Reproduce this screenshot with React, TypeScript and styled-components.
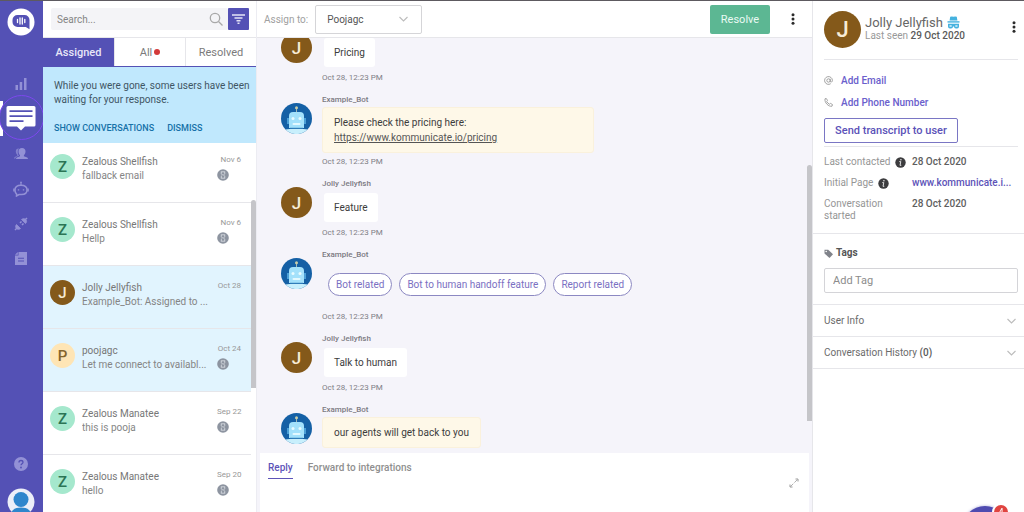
import React from "react";
import styled, { createGlobalStyle, css } from "styled-components";

const purple = "#5451b5";
const line = "#e6e6ea";

const GlobalStyle = createGlobalStyle`
  * { box-sizing: border-box; }
  body { margin: 0; background: #fff; font-family: Roboto, "Liberation Sans", sans-serif; font-size: 10px; color: #4a4a4a; }
  button, input, select { font: inherit; color: inherit; margin: 0; }
  button { cursor: pointer; background: none; border: 0; padding: 0; }
  ul, dl, dd, h1, h2, p { margin: 0; padding: 0; list-style: none; font-weight: inherit; }
  a { text-decoration: none; color: inherit; }
  svg { display: block; flex: none; }
`;

const Shell = styled.div`
  display: grid;
  grid-template-columns: 43px 214px minmax(0, 1fr) 212px;
  height: 100vh;
  overflow: hidden;
  border-top: 1px solid #5d5a60;
`;

/* ---------- navigation rail ---------- */

const Rail = styled.nav`
  display: flex;
  flex-direction: column;
  align-items: center;
  background: ${purple};
  padding: 7px 1px 0 0;
  min-height: 0;
  color: #9391d6;
  z-index: 1;
`;

const NavList = styled.ul`
  margin-top: 30px;
  width: 100%;
`;

const NavItem = styled.li<{ $active?: boolean }>`
  height: 35px;
  display: flex;
  justify-content: center;
  border-left: ${(p) => (p.$active ? "3px solid #fff" : "0")};
`;

const NavLink = styled.a<{ $active?: boolean }>`
  display: flex;
  align-items: center;
  justify-content: center;
  flex: none;
  ${(p) =>
    p.$active &&
    css`
      width: 45px;
      height: 45px;
      margin: -6px -2px -4px -5px;
      border: 1px solid #7c48ee;
      border-radius: 50%;
      background: ${purple};
      color: #fff;
    `}
`;

const RailFoot = styled.div`
  margin-top: auto;
  display: flex;
  flex-direction: column;
  align-items: center;
  gap: 17px;
`;

const ProfileButton = styled.button`
  height: 24px;
  overflow: hidden;
`;

/* ---------- conversation list ---------- */

const ListPanel = styled.section`
  display: flex;
  flex-direction: column;
  min-height: 0;
  border-right: 1px solid #ececf2;
`;

const SearchBar = styled.form`
  display: flex;
  height: 37px;
  padding: 7px 7px 7px 8px;
  border-bottom: 1px solid ${line};
`;

const SearchField = styled.label`
  flex: 1;
  display: flex;
  align-items: center;
  background: #f4f4f7;
  padding: 0 5px 0 6px;
  color: #a3a3a3;
  border-radius: 2px;
`;

const SearchInput = styled.input`
  flex: 1;
  min-width: 0;
  border: 0;
  padding: 0;
  background: none;
  outline: 0;
  &::placeholder { color: #858585; opacity: 1; }
`;

const FilterButton = styled.button`
  width: 21px;
  display: grid;
  place-items: center;
  background: ${purple};
  border-radius: 1px;
`;

const Tabs = styled.div`
  display: grid;
  grid-template-columns: repeat(3, 1fr);
  height: 29px;
  border-bottom: 1px solid ${purple};
`;

const Tab = styled.button<{ $active?: boolean }>`
  display: flex;
  align-items: center;
  justify-content: center;
  gap: 2px;
  font-size: 11px;
  font-weight: ${(p) => (p.$active ? 500 : 400)};
  color: ${(p) => (p.$active ? "#e8e7f8" : "#7b7b7b")};
  background: ${(p) => (p.$active ? purple : "#fff")};
  & + & { border-left: 1px solid ${line}; }
`;

const Dot = styled.span`
  width: 6px;
  height: 6px;
  border-radius: 50%;
  background: #d33a3a;
`;

const Banner = styled.div`
  background: #c0e8fd;
  padding: 12px 0 0 11px;
  height: 76px;
  line-height: 14px;
  color: #3f5664;
  white-space: nowrap;
  z-index: 1;
`;

const BannerActions = styled.div`
  display: flex;
  gap: 13px;
  margin-top: 14px;
`;

const BannerAction = styled.button`
  font-size: 9px;
  font-weight: 500;
  line-height: 14px;
  color: #1671a8;
`;

const ScrollPane = styled.div`
  flex: 1;
  min-height: 0;
  display: grid;
  grid-template-columns: minmax(0, 1fr) 5px;
  overflow: hidden;
`;

const Thumb = styled.div<{ $start: number; $size: number }>`
  margin-top: ${(p) => p.$start}px;
  height: ${(p) => p.$size}px;
  border-radius: 3px 3px 0 0;
  background: #c5c5c9;
`;

const ConversationList = styled.ul`
  margin-top: -3px;
`;

const Conversation = styled.li<{ $unread?: boolean }>`
  display: grid;
  grid-template-columns: 25px minmax(0, 1fr) 34px;
  height: 63px;
  padding: 14px 0 0 7px;
  border-bottom: 1px solid ${line};
  background: ${(p) => (p.$unread ? "#e1f4fe" : "#fff")};
`;

const Initial = styled.span<{ $bg: string; $fg: string; $size: number; $text: number }>`
  flex: none;
  display: grid;
  place-items: center;
  width: ${(p) => p.$size}px;
  height: ${(p) => p.$size}px;
  border-radius: 50%;
  background: ${(p) => p.$bg};
  color: ${(p) => p.$fg};
  font-size: ${(p) => p.$text}px;
  font-weight: 500;
`;

const Summary = styled.div`
  line-height: 14px;
  color: #777;
  padding: 1px 0 0 7px;
`;

const Preview = styled.p`
  overflow: hidden;
  text-overflow: ellipsis;
  white-space: nowrap;
  color: #858585;
`;

const Meta = styled.div`
  display: flex;
  flex-direction: column;
  gap: 3px;
  font-size: 8px;
  line-height: 12px;
  color: #989898;
`;

const MetaDate = styled.time`
  text-align: right;
  padding-right: 10px;
  white-space: nowrap;
`;

/* ---------- chat ---------- */

const Chat = styled.main`
  display: flex;
  flex-direction: column;
  min-height: 0;
  background: #f5f4fa;
`;

const ChatHeader = styled.header`
  display: flex;
  align-items: center;
  height: 37px;
  flex: none;
  padding: 0 15px 0 7px;
  background: #fff;
  border-bottom: 1px solid ${line};
`;

const AssignLabel = styled.label`
  display: flex;
  align-items: center;
  gap: 7px;
  color: #a0a0a0;
`;

const SelectWrap = styled.span`
  display: grid;
  align-items: center;
  & > * { grid-area: 1 / 1; }
  & > svg { justify-self: end; margin-right: 14px; pointer-events: none; }
`;

const AssignSelect = styled.select`
  appearance: none;
  width: 107px;
  height: 29px;
  padding: 0 11px;
  border: 1px solid #d5d5d8;
  border-radius: 2px;
  background: #fff;
  color: #555;
`;

const ResolveButton = styled.button`
  margin-left: auto;
  width: 60px;
  height: 29px;
  border-radius: 2px;
  background: #5cb793;
  color: #eafaf3;
  font-size: 11px;
`;

const MenuButton = styled.button`
  width: 8px;
  display: grid;
  place-items: center;
`;

const HeaderMenu = styled(MenuButton)`
  margin-left: 19px;
`;

const Messages = styled.div`
  display: flex;
  flex-direction: column;
  justify-content: flex-end;
  gap: 8px;
  min-height: 0;
  padding: 0 0 5px 24px;
  overflow: hidden;
`;

const MessageRow = styled.article`
  display: flex;
  flex: none;
  gap: 10px;
`;

const Face = styled.div`
  flex: none;
  width: 31px;
  padding-top: 10px;
`;

const MessageBody = styled.div`
  display: flex;
  flex-direction: column;
  align-items: flex-start;
`;

const Sender = styled.h2`
  font-size: 8px;
  font-weight: 500;
  line-height: 14px;
  color: #7c7a82;
`;

const Bubble = styled.div<{ $bot?: boolean; $wide?: boolean }>`
  line-height: 15px;
  color: #3c3c3c;
  border-radius: 3px;
  ${(p) =>
    p.$bot
      ? css`
          padding: 7px 11px;
          background: #fef8e8;
          border: 1px solid #faf1dc;
        `
      : css`
          margin: 2px 0 2px 2px;
          padding: 7px 10px;
          background: #fff;
        `}
  ${(p) => p.$wide && "width: 272px;"}
`;

const BubbleLink = styled.a`
  text-decoration: underline;
  color: #555;
`;

const Replies = styled.div`
  display: flex;
  gap: 7px;
  padding: 11px 0 12px 6px;
`;

const ReplyChip = styled.button`
  height: 23px;
  padding: 0 7px;
  border: 1px solid #8c88c2;
  border-radius: 12px;
  background: #fff;
  color: #7a70c2;
  white-space: nowrap;
`;

const Stamp = styled.time`
  margin-top: 2px;
  font-size: 8px;
  line-height: 14px;
  color: #807e86;
`;

const Composer = styled.section`
  flex: none;
  display: flex;
  flex-direction: column;
  height: 59px;
  margin: 0 3px;
  padding: 9px 10px 0 8px;
  background: #fff;
`;

const ComposerTabs = styled.div`
  display: flex;
  gap: 15px;
`;

const ComposerTab = styled.button<{ $active?: boolean }>`
  height: 17px;
  padding-bottom: 4px;
  font-weight: 500;
  line-height: 12px;
  color: ${(p) => (p.$active ? "#5d53b8" : "#8f8f8f")};
  border-bottom: 1px solid ${(p) => (p.$active ? "#5d53b8" : "transparent")};
`;

const ExpandButton = styled.button`
  align-self: flex-end;
  margin-top: -1px;
`;

/* ---------- user details ---------- */

const Details = styled.aside`
  min-height: 0;
  overflow: hidden;
  border-left: 1px solid ${line};
  color: #666;
`;

const Block = styled.section`
  padding: 0 6px 0 11px;
  border-bottom: 1px solid ${line};
`;

const Person = styled.div`
  display: flex;
  align-items: flex-start;
  height: 59px;
  padding-top: 10px;
  gap: 4px;
  border-bottom: 1px solid ${line};
`;

const PersonText = styled.div`
  flex: 1;
  padding-top: 4px;
  line-height: 12px;
  color: #999;
  white-space: nowrap;
`;

const PersonName = styled.h1`
  display: flex;
  align-items: center;
  gap: 4px;
  font-size: 13px;
  line-height: 15px;
  color: #666;
`;

const Strong = styled.b`
  font-weight: 500;
  color: #5a5a5a;
`;

const PersonMenu = styled(MenuButton)`
  margin-top: 10px;
`;

const Contacts = styled.div`
  display: flex;
  flex-direction: column;
  align-items: flex-start;
  padding: 9px 0 3px;
  border-bottom: 1px solid ${line};
`;

const ContactLink = styled.a`
  display: flex;
  align-items: center;
  gap: 8px;
  height: 22px;
  font-weight: 500;
  color: #6a60cc;
`;

const TranscriptButton = styled.button`
  height: 25px;
  width: 134px;
  margin-top: 5px;
  border: 1px solid #7a76c4;
  border-radius: 2px;
  font-weight: 500;
  font-size: 11px;
  color: #5b52b8;
  white-space: nowrap;
`;

const Facts = styled.dl`
  display: grid;
  grid-template-columns: 83px minmax(0, 1fr);
  column-gap: 5px;
  row-gap: 9px;
  padding: 9px 0 11px;
  line-height: 12px;
`;

const FactName = styled.dt<{ $icon?: boolean }>`
  display: flex;
  align-items: center;
  gap: 5px;
  height: ${(p) => (p.$icon ? "12px" : "auto")};
  white-space: ${(p) => (p.$icon ? "nowrap" : "normal")};
  width: ${(p) => (p.$icon ? "auto" : "72px")};
  color: #969696;
`;

const FactValue = styled.dd`
  white-space: nowrap;
  font-weight: 500;
  color: #5e5e5e;
`;

const PageLink = styled.a`
  color: #5d53b8;
`;

const TagField = styled.label`
  display: block;
  padding: 13px 0 11px;
`;

const TagTitle = styled.span`
  display: flex;
  align-items: center;
  gap: 3px;
  font-weight: 700;
  line-height: 12px;
  color: #555;
`;

const TagInput = styled.input`
  display: block;
  width: 100%;
  height: 25px;
  margin-top: 9px;
  padding: 0 8px;
  border: 1px solid #d4d4d8;
  border-radius: 2px;
  font-size: 11px;
  &::placeholder { color: #8c8c8c; opacity: 1; }
`;

const Fold = styled.button`
  display: flex;
  align-items: center;
  justify-content: space-between;
  width: 100%;
  height: 32px;
  padding: 0 8px 0 11px;
  border-bottom: 1px solid ${line};
  color: #6b6b6b;
`;

const Launcher = styled.button`
  position: fixed;
  right: 16px;
  bottom: -40px;
  width: 46px;
  height: 46px;
  border-radius: 50%;
  background: #4f4bb0;
  box-shadow: 0 0 3px #aaa8d8;
`;

const Badge = styled.span`
  position: absolute;
  top: -1px;
  right: 0;
  width: 14px;
  height: 14px;
  border-radius: 50%;
  background: #e04440;
  box-shadow: 0 0 0 2px #fff;
  color: #fff;
  font-size: 9px;
  line-height: 14px;
`;

/* ---------- drawings ---------- */

const Logo = () => (
  <svg width="28" height="28" viewBox="0 0 28 28" aria-label="Kommunicate">
    <circle cx="14" cy="14" r="13.5" fill="#fff" />
    <path d="M10.5 7h7a5 5 0 0 1 5 5v9.2L18.8 19h-8.3a5 5 0 0 1-5-5v-2a5 5 0 0 1 5-5z" fill={purple} />
    <path d="M10.5 11.5v3M13 10v6M15.3 10v6M17.8 11.500v3" stroke="#fff" strokeWidth="1.3" strokeLinecap="round" />
  </svg>
);

const BarsIcon = () => (
  <svg width="12" height="12" viewBox="0 0 12 12" fill="currentColor">
    <path d="M.5 7H3v5H.5zM4.700 4h2.500v8H4.700zM9 0h2.500v12H9z" />
  </svg>
);

const ChatIcon = () => (
  <svg width="30" height="26" viewBox="0 0 30 26">
    <path d="M2 1h26a1.500 1.500 0 0 1 1.500 1.500V20a1.500 1.500 0 0 1-1.500 1.500h-9L15 25.500l-4-4H2A1.500 1.500 0 0 1 .5 20V2.500A1.500 1.500 0 0 1 2 1z" fill="#fff" />
    <path d="M3.500 6.200h23M3.500 11.200h23M3.500 16.200h14" stroke={purple} strokeWidth="1.800" />
  </svg>
);

const UsersIcon = () => (
  <svg width="14" height="12" viewBox="0 0 14 12" fill="currentColor">
    <path d="M8 0c2.200 0 3.600 1.400 3.500 3.500-.1 1.700-.7 2.900-1.600 3.700v1l3.300 1.200c.6.300.8.900.8 1.600H2c0-.7.200-1.300.8-1.600l3.200-1.200v-1C5 6.400 4.500 5.200 4.500 3.500 4.400 1.400 5.800 0 8 0z" />
    <path d="M5 .5C3 .3 1.700 1.700 1.800 3.400c.1 1.600.7 2.700 1.500 3.400v.9L.8 9C.2 9.300 0 9.900 0 10.500h1.300C1.600 9 3 8.500 5 7.800 3.500 6 3.300 2.200 5 .5z" opacity=".75" />
  </svg>
);

const BotIcon = () => (
  <svg width="16" height="16" viewBox="0 0 16 16" fill="none" stroke="currentColor">
    <path d="M8 4V1" strokeWidth="1.200" />
    <circle cx="8" cy="1.200" r=".8" fill="currentColor" stroke="none" />
    <path d="M3.500 15V12.800C2.200 11.900 2 10.700 2 9c0-3.200 2.200-4.800 6-4.800S14 5.800 14 9s-2.200 4.500-5.500 4.500H6L3.500 15z" strokeWidth="1.500" />
    <path d="M1 7.500v3M15 7.500v3" strokeWidth="1.600" />
    <path d="M5.500 8.200v1.400M10.500 8.200v1.400" strokeWidth="1.400" />
  </svg>
);

const PlugIcon = () => (
  <svg width="14" height="14" viewBox="0 0 14 14" fill="none" stroke="currentColor">
    <path d="M1 13l2-2M11.200 2.800L13 1M6 6l1.500-1.500M8 8l1.500-1.500" strokeWidth="1.500" />
    <path d="M2.500 7.500l4 4c-1.500 1.300-3 1-4 0s-1.300-2.500 0-4zM7.500 2.500l4 4c1.500-1.300 1.300-3 .3-4s-2.800-1.300-4.300 0z" fill="currentColor" strokeWidth=".8" />
  </svg>
);

const DocIcon = () => (
  <svg width="12" height="13" viewBox="0 0 12 13">
    <path d="M3.500 0H12v13H0V3.500L3.500 3.500z" fill="currentColor" />
    <path d="M0 2.800L2.800 0v2.800z" fill="currentColor" />
    <path d="M3 6.200h6M3 9h6" stroke={purple} strokeWidth="1.100" />
  </svg>
);

const HelpIcon = () => (
  <svg width="14" height="14" viewBox="0 0 14 14" fill="none">
    <circle cx="7" cy="7" r="7" fill="currentColor" />
    <path d="M5 5.500C5 4.200 5.900 3.500 7 3.500s2 .7 2 1.800c0 1.300-2 1.500-2 3" stroke={purple} strokeWidth="1.300" />
    <circle cx="7" cy="10.500" r=".9" fill={purple} />
  </svg>
);

const ProfileIcon = () => (
  <svg width="28" height="28" viewBox="0 0 28 28">
    <circle cx="14" cy="14" r="13.500" fill="#eceff8" />
    <circle cx="14" cy="11.500" r="7.500" fill="#2f86cc" />
    <path d="M4 26c1-5 5-6.500 10-6.500S23 21 24 26z" fill="#2f86cc" />
  </svg>
);

const SearchIcon = () => (
  <svg width="14" height="14" viewBox="0 0 14 14" fill="none" stroke="#a8a8a8" strokeWidth="1.300">
    <circle cx="6" cy="6" r="4.700" />
    <path d="M9.500 9.500l4 4" />
  </svg>
);

const FilterIcon = () => (
  <svg width="13" height="10" viewBox="0 0 13 10" stroke="#e4e3f6" strokeWidth="1.400">
    <path d="M0 1h13M2.500 4h8M4.500 6.800h4M5.500 9.300h2" />
  </svg>
);

const HourglassIcon = () => (
  <svg width="12" height="12" viewBox="0 0 12 12">
    <circle cx="6" cy="6" r="5.800" fill="#8d94a0" />
    <path d="M3.800 2.800h4.400M3.800 9.200h4.400M4.300 3v1.800L5.500 6 4.300 7.200V9M7.700 3v1.800L6.500 6l1.200 1.200V9" fill="none" stroke="#d5d9df" strokeWidth=".9" />
  </svg>
);

const Chevron = () => (
  <svg width="9" height="6" viewBox="0 0 9 6" fill="none" stroke="#bcbcbc" strokeWidth="1.100">
    <path d="M.5 1l4 4 4-4" />
  </svg>
);

const DotsIcon = () => (
  <svg width="4" height="12" viewBox="0 0 4 12" fill="#2b2b2b">
    <circle cx="2" cy="1.700" r="1.500" />
    <circle cx="2" cy="6" r="1.500" />
    <circle cx="2" cy="10.300" r="1.500" />
  </svg>
);

const RobotFace = () => (
  <svg width="31" height="31" viewBox="0 0 31 31">
    <circle cx="15.500" cy="15.500" r="15.500" fill="#1560a5" />
    <path d="M4.500 26.500C8 25.500 23 25.500 26.500 26.500a15.500 15.500 0 0 1-22 0z" fill="#c8effc" />
    <path d="M15.500 9V5" stroke="#9fb9b6" strokeWidth="1" />
    <circle cx="15.500" cy="4.800" r="1.500" fill="#c9cda8" />
    <path d="M8 13a4 4 0 0 1 4-4h7a4 4 0 0 1 4 4v12H8z" fill="#a3e1fb" />
    <path d="M6 15h2v6H6zM23 15h2v6h-2z" fill="#4c9fd6" />
    <circle cx="12" cy="15.500" r="1.500" fill="#e9fbff" />
    <circle cx="19" cy="15.500" r="1.500" fill="#e9fbff" />
    <rect x="11.500" y="20" width="8" height="2" rx="1" fill="#e3f9ff" />
    <path d="M9 25.300h13" stroke="#2d7cba" strokeWidth="1" />
  </svg>
);

const IncognitoIcon = () => (
  <svg width="13" height="13" viewBox="0 0 13 13" fill="#45b2df">
    <path d="M3.200.8q1.700-.8 3.300 0 1.600-.8 3.300 0l.6 3.700H2.600z" />
    <path d="M.5 5.200h12v1.400H.5z" />
    <path d="M1 7.800h11v2.700a2 2 0 0 1-2 2H9a2 2 0 0 1-2-2h-1a2 2 0 0 1-2 2H3a2 2 0 0 1-2-2z" />
    <path d="M2.500 9.200h2.200v1.500H2.500zM8.300 9.200h2.200v1.500H8.300z" fill="#d9f1fb" />
  </svg>
);

const AtIcon = () => (
  <svg width="9" height="9" viewBox="0 0 9 9" fill="none" stroke="#8d8d8d" strokeWidth=".8">
    <circle cx="4.500" cy="4.500" r="1.700" />
    <path d="M6.200 2.800v2.400c0 1.300 2.200 1.200 2.200-.7a3.900 3.900 0 1 0-1.700 3.200" />
  </svg>
);

const PhoneIcon = () => (
  <svg width="9" height="9" viewBox="0 0 9 9" fill="none" stroke="#8d8d8d" strokeWidth=".8">
    <path d="M1 .8l1.300-.3L3.500 2.400l-.8 1c.5 1.200 1.500 2.200 2.800 2.800l1-.8 2 1.200L8 8.200C4.500 9 .3 4.500 1 .8z" />
  </svg>
);

const InfoIcon = () => (
  <svg width="11" height="11" viewBox="0 0 11 11">
    <circle cx="5.500" cy="5.500" r="5.200" fill="#3c3c3e" />
    <path d="M4.300 4.600h1.500L5 8.300h1.300" fill="none" stroke="#e4e4e4" strokeWidth="1" />
    <circle cx="5.900" cy="2.700" r=".8" fill="#e4e4e4" />
  </svg>
);

const TagIcon = () => (
  <svg width="9" height="9" viewBox="0 0 9 9">
    <path d="M.5 .8h3.700L9 5.300 5.500 9 .5 4.500z" fill="#80838a" />
    <circle cx="2.200" cy="2.500" r=".8" fill="#fff" />
  </svg>
);

const ExpandIcon = () => (
  <svg width="10" height="10" viewBox="0 0 10 10" fill="none" stroke="#9a9a9a">
    <path d="M1.500 8.500l7-7" strokeWidth=".8" strokeDasharray="4 1.500" />
    <path d="M6.500 1h2.500v2.500M3.500 9H1V6.500" />
  </svg>
);

/* ---------- content ---------- */

const palette: Record<string, [string, string]> = {
  Z: ["#a5e8cd", "#2c7555"],
  J: ["#84591a", "#f7ecd6"],
  P: ["#fee5b5", "#84642b"],
};

const Avatar = ({ letter, size, text }: { letter: string; size: number; text: number }) => (
  <Initial $bg={palette[letter][0]} $fg={palette[letter][1]} $size={size} $text={text}>
    {letter}
  </Initial>
);

const conversations = [
  { letter: "Z", name: "Zealous Shellfish", text: "fallback email", date: "Nov 6", waiting: true },
  { letter: "Z", name: "Zealous Shellfish", text: "Hellp", date: "Nov 6", waiting: true },
  { letter: "J", name: "Jolly Jellyfish", text: "Example_Bot: Assigned to ...", date: "Oct 28", unread: true },
  { letter: "P", name: "poojagc", text: "Let me connect to availabl...", date: "Oct 24", waiting: true, unread: true },
  { letter: "Z", name: "Zealous Manatee", text: "this is pooja", date: "Sep 22", waiting: true },
  { letter: "Z", name: "Zealous Manatee", text: "hello", date: "Sep 20", waiting: true },
];

const navigation = [
  { label: "Dashboard", icon: <BarsIcon /> },
  { label: "Conversations", icon: <ChatIcon />, active: true },
  { label: "Users", icon: <UsersIcon /> },
  { label: "Bots", icon: <BotIcon /> },
  { label: "Integrations", icon: <PlugIcon /> },
  { label: "Helpcenter", icon: <DocIcon /> },
];

const Message = ({ bot, children }: { bot?: boolean; children: React.ReactNode }) => (
  <MessageRow>
    <Face>{bot ? <RobotFace /> : <Avatar letter="J" size={31} text={17} />}</Face>
    <MessageBody>
      <Sender>{bot ? "Example_Bot" : "Jolly Jellyfish"}</Sender>
      {children}
    </MessageBody>
  </MessageRow>
);

const Sent = () => <Stamp>Oct 28, 12:23 PM</Stamp>;

export default function App() {
  return (
    <>
      <GlobalStyle />
      <Shell>
        <Rail>
          <Logo />
          <NavList>
            {navigation.map((n) => (
              <NavItem key={n.label} $active={n.active}>
                <NavLink href="#" aria-label={n.label} $active={n.active}>{n.icon}</NavLink>
              </NavItem>
            ))}
          </NavList>
          <RailFoot>
            <button aria-label="Help"><HelpIcon /></button>
            <ProfileButton aria-label="Profile"><ProfileIcon /></ProfileButton>
          </RailFoot>
        </Rail>

        <ListPanel>
          <SearchBar>
            <SearchField>
              <SearchInput placeholder="Search..." aria-label="Search" />
              <SearchIcon />
            </SearchField>
            <FilterButton type="button" aria-label="Filter"><FilterIcon /></FilterButton>
          </SearchBar>
          <Tabs>
            <Tab $active>Assigned</Tab>
            <Tab>All<Dot /></Tab>
            <Tab>Resolved</Tab>
          </Tabs>
          <Banner>
            <p>While you were gone, some users have been<br />waiting for your response.</p>
            <BannerActions>
              <BannerAction>SHOW CONVERSATIONS</BannerAction>
              <BannerAction>DISMISS</BannerAction>
            </BannerActions>
          </Banner>
          <ScrollPane>
            <ConversationList>
              {conversations.map((c, i) => (
                <Conversation key={i} $unread={c.unread}>
                  <Avatar letter={c.letter} size={25} text={15} />
                  <Summary>
                    <p>{c.name}</p>
                    <Preview>{c.text}</Preview>
                  </Summary>
                  <Meta>
                    <MetaDate>{c.date}</MetaDate>
                    {c.waiting && <HourglassIcon />}
                  </Meta>
                </Conversation>
              ))}
            </ConversationList>
            <Thumb $start={57} $size={188} />
          </ScrollPane>
        </ListPanel>

        <Chat>
          <ChatHeader>
            <AssignLabel>
              Assign to:
              <SelectWrap>
                <AssignSelect defaultValue="Poojagc"><option>Poojagc</option></AssignSelect>
                <Chevron />
              </SelectWrap>
            </AssignLabel>
            <ResolveButton>Resolve</ResolveButton>
            <HeaderMenu aria-label="More"><DotsIcon /></HeaderMenu>
          </ChatHeader>
          <ScrollPane>
            <Messages>
              <Message><Bubble>Pricing</Bubble><Sent /></Message>
              <Message bot>
                <Bubble $bot $wide>
                  Please check the pricing here:<br />
                  <BubbleLink href="#">https://www.kommunicate.io/pricing</BubbleLink>
                </Bubble>
                <Sent />
              </Message>
              <Message><Bubble>Feature</Bubble><Sent /></Message>
              <Message bot>
                <Replies>
                  <ReplyChip>Bot related</ReplyChip>
                  <ReplyChip>Bot to human handoff feature</ReplyChip>
                  <ReplyChip>Report related</ReplyChip>
                </Replies>
                <Sent />
              </Message>
              <Message><Bubble>Talk to human</Bubble><Sent /></Message>
              <Message bot><Bubble $bot>our agents will get back to you</Bubble></Message>
            </Messages>
            <Thumb $start={127} $size={256} />
          </ScrollPane>
          <Composer>
            <ComposerTabs>
              <ComposerTab $active>Reply</ComposerTab>
              <ComposerTab>Forward to integrations</ComposerTab>
            </ComposerTabs>
            <ExpandButton aria-label="Expand"><ExpandIcon /></ExpandButton>
          </Composer>
        </Chat>

        <Details>
          <Block>
            <Person>
              <Avatar letter="J" size={37} text={22} />
              <PersonText>
                <PersonName>Jolly Jellyfish <IncognitoIcon /></PersonName>
                <p>Last seen <Strong>29 Oct 2020</Strong></p>
              </PersonText>
              <PersonMenu aria-label="User options"><DotsIcon /></PersonMenu>
            </Person>
            <Contacts>
              <ContactLink href="#"><AtIcon />Add Email</ContactLink>
              <ContactLink href="#"><PhoneIcon />Add Phone Number</ContactLink>
              <TranscriptButton>Send transcript to user</TranscriptButton>
            </Contacts>
            <Facts>
              <FactName $icon>Last contacted <InfoIcon /></FactName>
              <FactValue>28 Oct 2020</FactValue>
              <FactName $icon>Initial Page <InfoIcon /></FactName>
              <FactValue><PageLink href="#">www.kommunicate.i...</PageLink></FactValue>
              <FactName>Conversation started</FactName>
              <FactValue>28 Oct 2020</FactValue>
            </Facts>
          </Block>
          <Block>
            <TagField>
              <TagTitle><TagIcon />Tags</TagTitle>
              <TagInput placeholder="Add Tag" />
            </TagField>
          </Block>
          <Fold>User Info<Chevron /></Fold>
          <Fold><span>Conversation History <Strong>(0)</Strong></span><Chevron /></Fold>
        </Details>
      </Shell>
      <Launcher aria-label="Open chat"><Badge>4</Badge></Launcher>
    </>
  );
}
